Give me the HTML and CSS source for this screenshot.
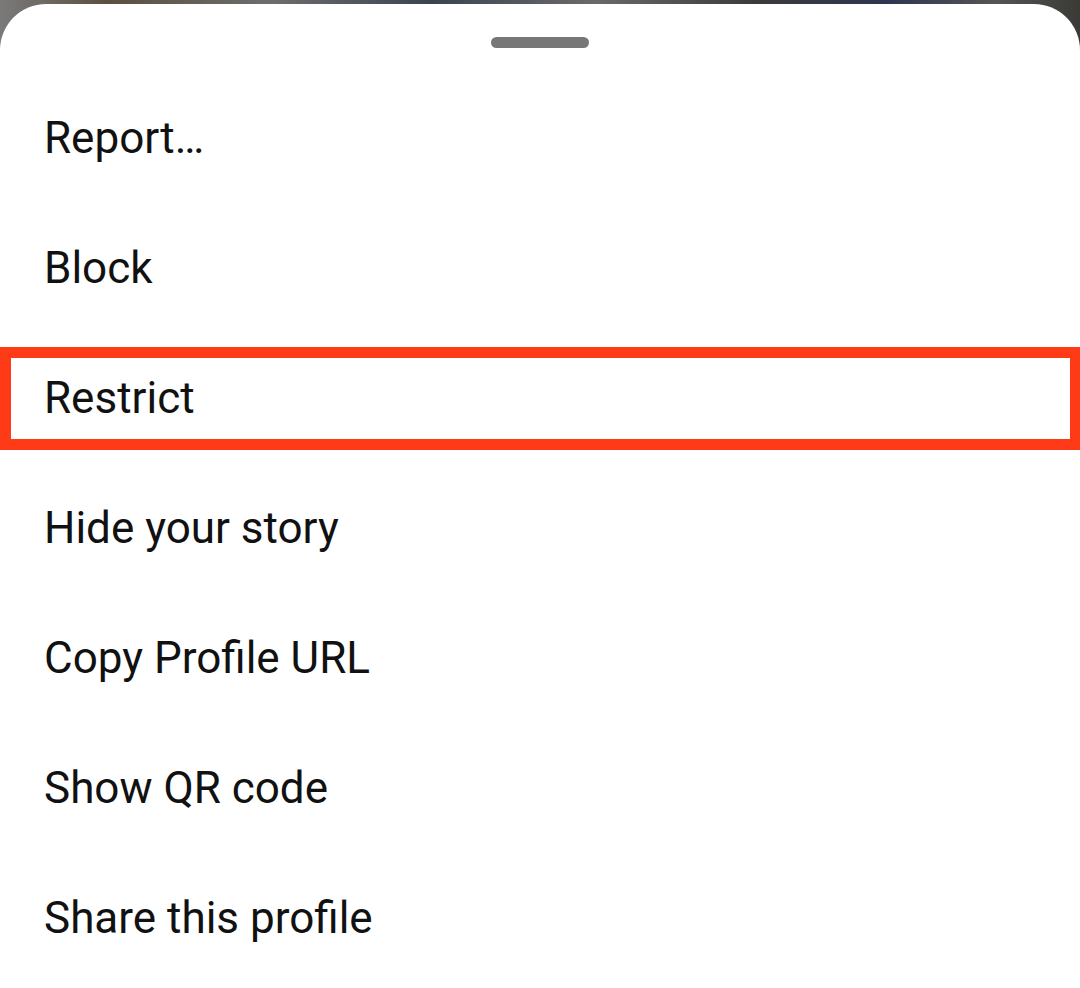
FILE: index.html
```html
<!DOCTYPE html>
<html lang="en">
<head>
<meta charset="utf-8">
<title>Profile options</title>
<link rel="stylesheet" href="styles.css">
</head>
<body>
<div class="backdrop">
  <div class="sheet">
    <div class="handle-wrap"><div class="handle"></div></div>
    <ul class="menu">
      <li class="item">Report…</li>
      <li class="item">Block</li>
      <li class="item item-highlight">Restrict</li>
      <li class="item">Hide your story</li>
      <li class="item">Copy Profile URL</li>
      <li class="item">Show QR code</li>
      <li class="item">Share this profile</li>
    </ul>
  </div>
</div>
</body>
</html>
```

FILE: styles.css
```css
html, body {
  margin: 0;
  padding: 0;
}
body {
  width: 1080px;
  height: 988px;
  overflow: hidden;
  font-family: Roboto, "Liberation Sans", sans-serif;
  background: #6a6a6a;
}
.backdrop {
  height: 988px;
  padding-top: 4px;
  box-sizing: border-box;
  background: linear-gradient(90deg, #7a7a7a 0%, #5a5040 10%, #6d6d6d 25%, #3a4450 40%, #6a6a6a 55%, #3b3b3b 70%, #2e3550 82%, #555 92%, #3a3a36 100%);
}
.sheet {
  background: #ffffff;
  border-radius: 46px 46px 0 0;
  height: 984px;
  overflow: hidden;
}
.handle-wrap {
  display: flex;
  justify-content: center;
  padding-top: 33px;
  padding-bottom: 25px;
}
.handle {
  width: 98px;
  height: 11px;
  border-radius: 6px;
  background: #777777;
}
.menu {
  list-style: none;
  margin: 0;
  padding: 0;
}
.item {
  position: relative;
  height: 130px;
  line-height: 130px;
  padding-left: 44px;
  font-size: 44px;
  color: #111111;
  white-space: nowrap;
}
.item-highlight::after {
  content: "";
  position: absolute;
  left: 0;
  right: 0;
  top: 14px;
  bottom: 13px;
  border: 11px solid #ff3a17;
  border-right-width: 10px;
}
```
